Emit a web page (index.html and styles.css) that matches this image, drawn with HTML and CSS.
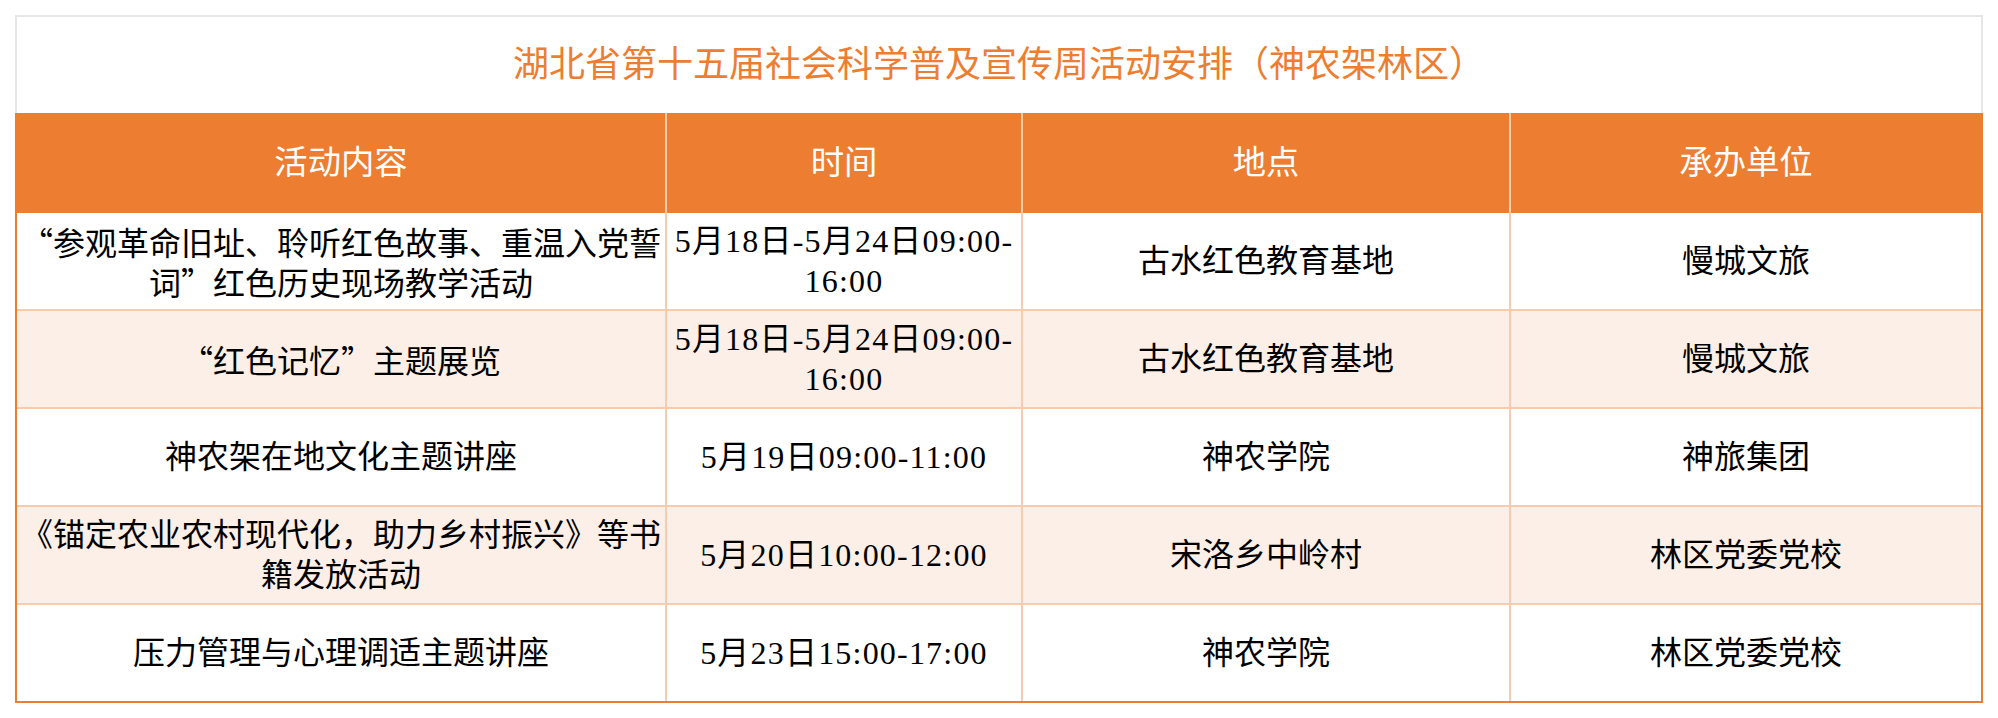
FILE: index.html
```html
<!DOCTYPE html>
<html lang="zh-CN">
<head>
<meta charset="utf-8">
<title>湖北省第十五届社会科学普及宣传周活动安排（神农架林区）</title>
<link rel="stylesheet" href="styles.css">
</head>
<body>
<div class="sheet">
  <div class="title">湖北省第十五届社会科学普及宣传周活动安排（神农架林区）</div>
  <div class="table">
    <div class="row head">
      <div class="cell">活动内容</div>
      <div class="cell">时间</div>
      <div class="cell">地点</div>
      <div class="cell">承办单位</div>
    </div>
    <div class="row">
      <div class="cell"><span class="cjk">“参观革命旧址、聆听红色故事、重温入党誓词”红色历史现场教学活动</span></div>
      <div class="cell time">5月18日-5月24日09:00-<wbr>16:00</div>
      <div class="cell">古水红色教育基地</div>
      <div class="cell">慢城文旅</div>
    </div>
    <div class="row alt">
      <div class="cell"><span class="cjk">“红色记忆”主题展览</span></div>
      <div class="cell time">5月18日-5月24日09:00-<wbr>16:00</div>
      <div class="cell">古水红色教育基地</div>
      <div class="cell">慢城文旅</div>
    </div>
    <div class="row">
      <div class="cell">神农架在地文化主题讲座</div>
      <div class="cell time">5月19日09:00-11:00</div>
      <div class="cell">神农学院</div>
      <div class="cell">神旅集团</div>
    </div>
    <div class="row alt">
      <div class="cell">《锚定农业农村现代化，助力乡村振兴》等书籍发放活动</div>
      <div class="cell time">5月20日10:00-12:00</div>
      <div class="cell">宋洛乡中岭村</div>
      <div class="cell">林区党委党校</div>
    </div>
    <div class="row">
      <div class="cell">压力管理与心理调适主题讲座</div>
      <div class="cell time">5月23日15:00-17:00</div>
      <div class="cell">神农学院</div>
      <div class="cell">林区党委党校</div>
    </div>
  </div>
</div>
</body>
</html>
```

FILE: styles.css
```css
html, body {
  margin: 0;
  padding: 0;
  background: #ffffff;
}

body {
  padding: 15px;
  font-family: "Liberation Serif", "Noto Sans CJK SC", serif;
  color: #000000;
}

.sheet {
  width: 1968px;
}

.title {
  height: 96px;
  border: 2px solid #e6e6e6;
  border-bottom: none;
  display: flex;
  align-items: center;
  justify-content: center;
  font-size: 36px;
  color: #ed7d31;
  line-height: 40px;
}

.table {
  border: 2px solid #ed7d31;
  border-top: none;
}

.row {
  display: grid;
  grid-template-columns: 648px 354px 486px 470px;
  column-gap: 2px;
  height: 96px;
  background: #f8cbad;
  border-top: 2px solid #f8cbad;
}

.row.head {
  height: 100px;
  border-top: none;
}

.row.head + .row {
  border-top: none;
}

.cell {
  display: flex;
  align-items: center;
  justify-content: center;
  text-align: center;
  padding: 0 2px;
  background: #ffffff;
  font-size: 32px;
  line-height: 40px;
}

.cell.time {
  letter-spacing: 1.2px;
}

.cjk {
  font-family: "Noto Sans CJK SC", sans-serif;
}

.row.alt .cell {
  background: #fcefe7;
}

.row.head .cell {
  background: #ed7d31;
  color: #ffffff;
  font-size: 33.33px;
}
```
